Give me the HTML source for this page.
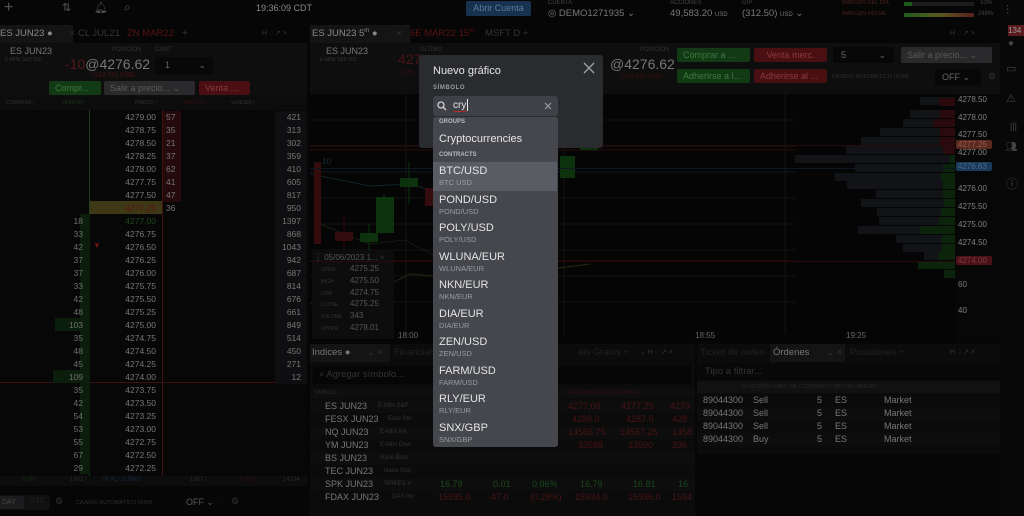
<!DOCTYPE html>
<html><head><meta charset="utf-8"><style>
*{margin:0;padding:0;box-sizing:border-box}
body{width:1024px;height:516px;background:#060606;overflow:hidden;position:relative;font-family:"Liberation Sans",sans-serif;color:#7a7a7a;font-size:9px}
.a{position:absolute;white-space:nowrap}
.p{background:#0e0e0f}
.row{position:absolute;left:0;width:307px;height:13px;font-size:8.5px;line-height:13px}
.row span{position:absolute}
.bid{right:224px;color:#6e6e6e}
.pr{right:151px;color:#767676}
.ask{left:166px;color:#767676}
.vd{right:6px;color:#767676}
.btn{position:absolute;height:14px;border-radius:2px;font-size:9px;line-height:14px;padding-left:6px;white-space:nowrap;overflow:hidden}
.g{background:#123a14;color:#3e7a40}
.r{background:#4a0f12;color:#8a3a3e}
.gr{background:#2a2a2c;color:#5a5a5a}
.lvl{position:absolute;height:8px}
.it{position:absolute;left:0;width:124px;height:28.5px;padding-left:6px}
.it b{display:block;font-weight:normal;color:#e4e4e6;font-size:11px;line-height:13px;padding-top:3px}
.it i{display:block;font-style:normal;color:#9a9ca1;font-size:7.5px;line-height:9px}
.ir{position:absolute;left:310px;width:385px;height:13px;font-size:9px;line-height:13px}
.ir span{position:absolute}
.or{position:absolute;left:697px;width:303px;height:13px;font-size:9px;line-height:13px;color:#777}
.or span{position:absolute}
</style></head><body>

<!-- top bar -->
<div class="a" style="left:4px;top:0;font-size:16px;color:#555;line-height:16px">+</div>
<div class="a" style="left:62px;top:1px;font-size:11px;color:#555">⇅</div>
<div class="a" style="left:94px;top:1px;font-size:11px;color:#555">🔔︎</div>
<div class="a" style="left:124px;top:0;font-size:12px;color:#555">⌕</div>
<div class="a" style="left:256px;top:3px;font-size:9px;color:#8a8a8a">19:36:09 CDT</div>
<div class="a" style="left:466px;top:1px;width:65px;height:15px;background:#16324e;border-radius:2px;color:#5b7a98;font-size:9px;line-height:15px;text-align:center">Abrir Cuenta</div>
<div class="a" style="left:548px;top:0;font-size:6px;color:#444">CUENTA</div>
<div class="a" style="left:548px;top:8px;font-size:9.5px;color:#777">◎ DEMO1271935 ⌄</div>
<div class="a" style="left:670px;top:0;font-size:6px;color:#444">ACCIONES</div>
<div class="a" style="left:670px;top:8px;font-size:9.5px;color:#777">49,583.20 <small style="font-size:6px">USD</small></div>
<div class="a" style="left:742px;top:0;font-size:6px;color:#444">G/P</div>
<div class="a" style="left:742px;top:8px;font-size:9.5px;color:#777">(312.50) <small style="font-size:6px">USD</small> ⌄</div>
<div class="a" style="left:842px;top:0;font-size:5.5px;color:#4a2020">MARGEN DEL DÍA</div>
<div class="a" style="left:842px;top:11px;font-size:5.5px;color:#4a2020">MARGEN INICIAL</div>
<div class="a" style="left:904px;top:2px;width:70px;height:4px;background:#1c1c1e"><div style="width:8px;height:4px;background:#1e5a1e"></div></div>
<div class="a" style="left:904px;top:13px;width:70px;height:4px;background:linear-gradient(90deg,#1e5a1e,#5a5a1e,#5a1e1e)"></div>
<div class="a" style="left:980px;top:0;font-size:6px;color:#444">10%</div>
<div class="a" style="left:978px;top:11px;font-size:6px;color:#444">248%</div>

<!-- right sidebar -->
<div class="a" style="left:1000px;top:0;width:24px;height:516px;background:#080808"></div>
<div class="a" style="left:1006px;top:3px;font-size:12px;color:#555">⫶</div>
<div class="a" style="left:1008px;top:25px;width:16px;height:11px;background:#5a1a1e;color:#999;font-size:8px;line-height:11px">134</div>
<div class="a" style="left:1008px;top:38px;font-size:10px;color:#444">●</div>
<div class="a" style="left:1006px;top:62px;font-size:11px;color:#444">▭</div>
<div class="a" style="left:1006px;top:92px;font-size:11px;color:#444">⚠︎</div>
<div class="a" style="left:1010px;top:121px;font-size:9px;color:#444">|||</div>
<div class="a" style="left:1005px;top:142px;font-size:10px;color:#444">👥︎</div>
<div class="a" style="left:1006px;top:175px;font-size:12px;color:#444">ⓘ</div>

<!-- tabs row -->
<div class="a p" style="left:0;top:25px;width:73px;height:18px;background:#141415"></div>
<div class="a" style="left:0;top:28px;font-size:9.5px;color:#888">ES JUN23 ● <span style="color:#333;margin-left:14px">×</span></div>
<div class="a" style="left:78px;top:28px;font-size:9.5px;color:#333">CL JUL21</div>
<div class="a" style="left:127px;top:28px;font-size:9.5px;color:#5a1212">ZN MAR22</div>
<div class="a" style="left:182px;top:28px;font-size:10px;color:#333">+</div>
<div class="a" style="left:262px;top:29px;font-size:7px;color:#333">H ◌ ↗ ×</div>
<div class="a" style="left:310px;top:25px;width:100px;height:18px;background:#141415"></div>
<div class="a" style="left:312px;top:28px;font-size:9.5px;color:#888">ES JUN23 5<sup style="font-size:6px">m</sup> ● <span style="color:#333;margin-left:16px">×</span></div>
<div class="a" style="left:410px;top:28px;font-size:9.5px;color:#5a1212">6E MAR22 15<sup style="font-size:6px">m</sup></div>
<div class="a" style="left:485px;top:28px;font-size:9.5px;color:#333">MSFT D  +</div>
<div class="a" style="left:950px;top:29px;font-size:7px;color:#333">H ◌ ↗ ×</div>

<!-- left panel header -->
<div class="a p" style="left:0;top:43px;width:307px;height:54px"></div>
<div class="a" style="left:10px;top:46px;font-size:9px;color:#777">ES JUN23</div>
<div class="a" style="left:5px;top:57px;font-size:5px;color:#333">E-MINI S&amp;P 500</div>
<div class="a" style="left:112px;top:47px;font-size:6px;color:#333">POSICIÓN</div>
<div class="a" style="left:155px;top:47px;font-size:6px;color:#333">CANT</div>
<div class="a" style="left:65px;top:56px;font-size:14px;color:#777"><span style="color:#5a1616">-10</span>@4276.62</div>
<div class="a" style="left:92px;top:72px;font-size:7px;color:#4a1414">(312.50) USD</div>
<div class="a" style="left:155px;top:57px;width:58px;height:17px;background:#080808;color:#666;font-size:9px;line-height:17px;padding-left:10px">1 <span style="margin-left:26px">⌄</span></div>
<div class="btn g" style="left:49px;top:81px;width:52px">Compr...</div>
<div class="btn gr" style="left:104px;top:81px;width:91px">Salir a precio... ⌄</div>
<div class="btn r" style="left:199px;top:81px;width:51px">Venta ...</div>
<div class="a" style="left:0;top:97px;width:307px;height:13px;background:#0c0c0d"></div>
<div class="a" style="left:6px;top:100px;font-size:5px;color:#333">COMPRAR |</div>
<div class="a" style="left:62px;top:100px;font-size:5px;color:#1a3a1a">OFERTA |</div>
<div class="a" style="left:135px;top:100px;font-size:5px;color:#333">PRECIO |</div>
<div class="a" style="left:184px;top:100px;font-size:5px;color:#3a1212">PRECIO |</div>
<div class="a" style="left:231px;top:100px;font-size:5px;color:#333">VENDER |</div>

<!-- order book -->
<div class="a" style="left:0;top:110px;width:307px;height:366px;background:#070707"></div>
<div class="a" style="left:89px;top:110px;width:1px;height:366px;background:#1a401a"></div>
<div class="a" style="left:162px;top:110px;width:1px;height:366px;background:#401212"></div>
<div class="a" style="left:0;top:382px;width:307px;height:1px;background:#3a1010"></div>
<div class="a" style="left:90px;top:201px;width:72px;height:13px;background:#3e3816"></div>
<div class="a" style="left:163px;top:111px;width:18px;height:91px;background:#250a0c"></div>
<div class="a" style="left:80px;top:214px;width:10px;height:260px;background:#0b1e0b"></div>
<div class="a" style="left:55px;top:318px;width:35px;height:13px;background:#0b1e0b"></div>
<div class="a" style="left:53px;top:370px;width:37px;height:13px;background:#0b1e0b"></div>
<div class="a" style="left:275px;top:111px;width:32px;height:273px;background:#0f0f11"></div>
<div class="a" style="left:93px;top:241px;font-size:8px;color:#6a1414">▼</div>

<div class="row" style="top:111px"><span class="pr">4279.00</span><span class="ask">57</span><span class="vd">421</span></div>
<div class="row" style="top:124px"><span class="pr">4278.75</span><span class="ask">35</span><span class="vd">313</span></div>
<div class="row" style="top:137px"><span class="pr">4278.50</span><span class="ask">21</span><span class="vd">302</span></div>
<div class="row" style="top:150px"><span class="pr">4278.25</span><span class="ask">37</span><span class="vd">359</span></div>
<div class="row" style="top:163px"><span class="pr">4278.00</span><span class="ask">62</span><span class="vd">410</span></div>
<div class="row" style="top:176px"><span class="pr">4277.75</span><span class="ask">41</span><span class="vd">605</span></div>
<div class="row" style="top:189px"><span class="pr">4277.50</span><span class="ask">47</span><span class="vd">817</span></div>
<div class="row" style="top:202px"><span class="pr" style="color:#5a1414">4277.25</span><span class="ask">36</span><span class="vd">950</span></div>
<div class="row" style="top:215px"><span class="bid">18</span><span class="pr" style="color:#1e4a1e">4277.00</span><span class="vd">1397</span></div>
<div class="row" style="top:228px"><span class="bid">33</span><span class="pr">4276.75</span><span class="vd">868</span></div>
<div class="row" style="top:241px"><span class="bid">42</span><span class="pr">4276.50</span><span class="vd">1043</span></div>
<div class="row" style="top:254px"><span class="bid">37</span><span class="pr">4276.25</span><span class="vd">942</span></div>
<div class="row" style="top:267px"><span class="bid">37</span><span class="pr">4276.00</span><span class="vd">687</span></div>
<div class="row" style="top:280px"><span class="bid">33</span><span class="pr">4275.75</span><span class="vd">814</span></div>
<div class="row" style="top:293px"><span class="bid">42</span><span class="pr">4275.50</span><span class="vd">676</span></div>
<div class="row" style="top:306px"><span class="bid">48</span><span class="pr">4275.25</span><span class="vd">661</span></div>
<div class="row" style="top:319px"><span class="bid">103</span><span class="pr">4275.00</span><span class="vd">849</span></div>
<div class="row" style="top:332px"><span class="bid">35</span><span class="pr">4274.75</span><span class="vd">514</span></div>
<div class="row" style="top:345px"><span class="bid">48</span><span class="pr">4274.50</span><span class="vd">450</span></div>
<div class="row" style="top:358px"><span class="bid">45</span><span class="pr">4274.25</span><span class="vd">271</span></div>
<div class="row" style="top:371px"><span class="bid">109</span><span class="pr">4274.00</span><span class="vd">12</span></div>
<div class="row" style="top:384px"><span class="bid">35</span><span class="pr">4273.75</span></div>
<div class="row" style="top:397px"><span class="bid">42</span><span class="pr">4273.50</span></div>
<div class="row" style="top:410px"><span class="bid">54</span><span class="pr">4273.25</span></div>
<div class="row" style="top:423px"><span class="bid">53</span><span class="pr">4273.00</span></div>
<div class="row" style="top:436px"><span class="bid">55</span><span class="pr">4272.75</span></div>
<div class="row" style="top:449px"><span class="bid">67</span><span class="pr">4272.50</span></div>
<div class="row" style="top:462px"><span class="bid">29</span><span class="pr">4272.25</span></div>

<div class="a" style="left:0;top:476px;width:307px;height:10px;background:#0c0c0d"></div>
<div class="a" style="left:22px;top:477px;font-size:6px;color:#143014">0 (0) |</div>
<div class="a" style="left:70px;top:477px;font-size:6px;color:#2a2a2a">1602 |</div>
<div class="a" style="left:103px;top:477px;font-size:6px;color:#122a44">IR AL ÚLTIMO</div>
<div class="a" style="left:190px;top:477px;font-size:6px;color:#2a2a2a">1367 |</div>
<div class="a" style="left:240px;top:477px;font-size:6px;color:#3a1010">0 (0) |</div>
<div class="a" style="left:283px;top:477px;font-size:6px;color:#2a2a2a">14104</div>
<div class="a" style="left:0;top:495px;width:50px;height:15px;background:#101011;border-radius:3px"></div>
<div class="a" style="left:0;top:496px;width:24px;height:13px;background:#1c1c1e;font-size:7px;color:#444;line-height:13px;padding-left:2px">DAY</div>
<div class="a" style="left:30px;top:498px;font-size:7px;color:#222">GTC</div>
<div class="a" style="left:55px;top:496px;font-size:9px;color:#333">⚙</div>
<div class="a" style="left:76px;top:500px;font-size:5.5px;color:#2e2e2e">CAJERO AUTOMÁTICO (ATM)</div>
<div class="a" style="left:178px;top:494px;width:46px;height:16px;background:#070707;font-size:9px;color:#555;line-height:16px;padding-left:8px">OFF ⌄</div>
<div class="a" style="left:231px;top:496px;font-size:9px;color:#333">⚙</div>

<!-- chart header -->
<div class="a p" style="left:310px;top:43px;width:690px;height:51px"></div>
<div class="a" style="left:326px;top:46px;font-size:9px;color:#777">ES JUN23</div>
<div class="a" style="left:320px;top:57px;font-size:5px;color:#333">E-MINI S&amp;P 500</div>
<div class="a" style="left:398px;top:51px;font-size:14px;color:#4a1414">427</div>
<div class="a" style="left:398px;top:70px;font-size:7px;color:#3a1010">-3.75</div>
<div class="a" style="left:420px;top:47px;font-size:6px;color:#333">ÚLTIMO</div>
<div class="a" style="left:640px;top:47px;font-size:6px;color:#333">POSICIÓN</div>
<div class="a" style="left:610px;top:56px;font-size:14px;color:#777">@4276.62</div>
<div class="a" style="left:620px;top:73px;font-size:7px;color:#3a1010">(312.50) USD</div>
<div class="btn g" style="left:677px;top:48px;width:73px">Comprar a ...</div>
<div class="btn r" style="left:754px;top:48px;width:73px;text-align:center;padding:0">Venta merc.</div>
<div class="btn g" style="left:677px;top:69px;width:73px">Adherirse a l...</div>
<div class="btn r" style="left:754px;top:69px;width:73px">Adherirse al ...</div>
<div class="a" style="left:833px;top:47px;width:61px;height:16px;background:#070707;font-size:9px;color:#666;line-height:16px;padding-left:8px">5 <span style="margin-left:30px">⌄</span></div>
<div class="btn gr" style="left:901px;top:47px;width:91px;height:16px;line-height:16px">Salir a precio... ⌄</div>
<div class="a" style="left:832px;top:74px;font-size:5.5px;color:#2e2e2e">CAJERO AUTOMÁTICO (ATM)</div>
<div class="a" style="left:935px;top:69px;width:46px;height:16px;background:#070707;font-size:9px;color:#666;line-height:16px;padding-left:7px">OFF ⌄</div>
<div class="a" style="left:988px;top:71px;font-size:9px;color:#333">⚙</div>

<!-- chart area -->
<div class="a" style="left:310px;top:94px;width:690px;height:248px;background:#050505"></div>
<svg class="a" style="left:310px;top:94px" width="690" height="248">
<g stroke="#121212" stroke-width="1">
<line x1="0" y1="26" x2="485" y2="26"/><line x1="0" y1="52" x2="485" y2="52"/><line x1="0" y1="78" x2="485" y2="78"/><line x1="0" y1="104" x2="485" y2="104"/><line x1="0" y1="130" x2="485" y2="130"/><line x1="0" y1="156" x2="485" y2="156"/><line x1="0" y1="182" x2="485" y2="182"/><line x1="0" y1="208" x2="485" y2="208"/>
<line x1="96" y1="0" x2="96" y2="240"/><line x1="254" y1="0" x2="254" y2="240"/><line x1="475" y1="0" x2="475" y2="240"/>
</g>
<line x1="0" y1="56" x2="485" y2="56" stroke="#2a0b0b"/>
<line x1="0" y1="78" x2="485" y2="78" stroke="#0e1820"/>
<line x1="0" y1="167" x2="485" y2="167" stroke="#2a0b0b"/>
<polyline points="0,80 60,92 100,90 160,108" stroke="#12232a" fill="none"/>
<polyline points="10,130 60,150 95,146 140,170 200,160" stroke="#1a1a10" fill="none"/>
<polyline points="0,210 60,200 100,180 160,185 280,170" stroke="#2a2410" fill="none"/>
<text x="12" y="70" font-size="8" fill="#1a2a3a" font-family="Liberation Sans">10</text>
<rect x="4" y="68" width="7" height="82" fill="#340c0e"/>
<line x1="34" y1="120" x2="34" y2="160" stroke="#340c0e"/><rect x="25" y="138" width="18" height="9" fill="#340c0e"/>
<line x1="59" y1="130" x2="59" y2="160" stroke="#0c320e"/><rect x="50" y="139" width="18" height="9" fill="#0c320e"/>
<line x1="74" y1="100" x2="74" y2="140" stroke="#0c320e"/><rect x="66" y="103" width="18" height="36" fill="#0c320e"/>
<line x1="99" y1="68" x2="99" y2="110" stroke="#0c320e"/><rect x="90" y="84" width="18" height="9" fill="#0c320e"/>
<rect x="115" y="94" width="12" height="18" fill="#340c0e"/>
<rect x="250" y="62" width="15" height="22" fill="#0c320e"/>
<rect x="270" y="50" width="18" height="6" fill="#0c320e"/>
<text x="88" y="244" font-size="8" fill="#666" font-family="Liberation Sans">18:00</text>
<text x="385" y="244" font-size="8" fill="#666" font-family="Liberation Sans">18:55</text>
<text x="536" y="244" font-size="8" fill="#666" font-family="Liberation Sans">19:25</text>
</svg>
<!-- ohlc box -->
<div class="a" style="left:312px;top:251px;width:82px;height:88px;background:#0d0d0e"></div>
<div class="a" style="left:314px;top:253px;font-size:8px;color:#555">⋮ 05/06/2023 1... <span style="color:#333">×</span></div>
<div class="a" style="left:321px;top:265px;font-size:5px;color:#333;line-height:11.8px">OPEN<br>HIGH<br>LOW<br>CLOSE<br>VOLUME<br>UPPER</div>
<div class="a" style="left:350px;top:263px;font-size:8px;color:#555;line-height:11.8px">4275.25<br>4275.50<br>4274.75<br>4275.25<br>343<br>4278.01</div>

<!-- price ladder (right) -->
<div class="a" style="left:955px;top:94px;width:45px;height:248px;background:#070707"></div>
<div class="lvl" style="left:920px;top:97px;width:35px;background:#121316"></div>
<div class="lvl" style="left:939px;top:98px;width:16px;background:#2a0a0c"></div>
<div class="lvl" style="left:910px;top:110px;width:45px;background:#121316"></div>
<div class="lvl" style="left:940px;top:110px;width:15px;background:#2a0a0c"></div>
<div class="lvl" style="left:903px;top:119px;width:52px;background:#121316"></div>
<div class="lvl" style="left:934px;top:119px;width:21px;background:#2a0a0c"></div>
<div class="lvl" style="left:880px;top:128px;width:75px;background:#121316"></div>
<div class="lvl" style="left:940px;top:128px;width:15px;background:#2a0a0c"></div>
<div class="lvl" style="left:861px;top:137px;width:94px;background:#121316"></div>
<div class="lvl" style="left:940px;top:137px;width:15px;background:#2a0a0c"></div>
<div class="lvl" style="left:846px;top:146px;width:109px;background:#121316"></div>
<div class="lvl" style="left:943px;top:146px;width:12px;background:#2a0a0c"></div>
<div class="lvl" style="left:795px;top:155px;width:160px;background:#121316"></div>
<div class="lvl" style="left:950px;top:155px;width:5px;background:#0b240b"></div>
<div class="lvl" style="left:855px;top:164px;width:100px;background:#121316"></div>
<div class="lvl" style="left:943px;top:164px;width:12px;background:#0b240b"></div>
<div class="lvl" style="left:835px;top:173px;width:120px;background:#121316"></div>
<div class="lvl" style="left:941px;top:173px;width:14px;background:#0b240b"></div>
<div class="lvl" style="left:847px;top:181px;width:108px;background:#121316"></div>
<div class="lvl" style="left:943px;top:181px;width:12px;background:#0b240b"></div>
<div class="lvl" style="left:876px;top:190px;width:79px;background:#121316"></div>
<div class="lvl" style="left:943px;top:190px;width:12px;background:#0b240b"></div>
<div class="lvl" style="left:861px;top:199px;width:94px;background:#121316"></div>
<div class="lvl" style="left:944px;top:199px;width:11px;background:#0b240b"></div>
<div class="lvl" style="left:877px;top:208px;width:78px;background:#121316"></div>
<div class="lvl" style="left:941px;top:208px;width:14px;background:#0b240b"></div>
<div class="lvl" style="left:879px;top:217px;width:76px;background:#121316"></div>
<div class="lvl" style="left:939px;top:217px;width:16px;background:#0b240b"></div>
<div class="lvl" style="left:858px;top:226px;width:97px;background:#121316"></div>
<div class="lvl" style="left:920px;top:226px;width:35px;background:#0b240b"></div>
<div class="lvl" style="left:896px;top:235px;width:59px;background:#121316"></div>
<div class="lvl" style="left:942px;top:235px;width:13px;background:#0b240b"></div>
<div class="lvl" style="left:903px;top:244px;width:52px;background:#121316"></div>
<div class="lvl" style="left:942px;top:244px;width:13px;background:#0b240b"></div>
<div class="lvl" style="left:924px;top:252px;width:31px;background:#121316"></div>
<div class="lvl" style="left:938px;top:252px;width:17px;background:#0b240b"></div>
<div class="lvl" style="left:918px;top:261px;width:37px;background:#0b240b"></div>
<div class="lvl" style="left:944px;top:270px;width:11px;background:#0b240b"></div>
<div class="a" style="left:310px;top:145px;width:645px;height:1px;background:#2a0b0b"></div>
<div class="a" style="left:310px;top:168px;width:645px;height:1px;background:#0e1820"></div>
<div class="a" style="left:310px;top:261px;width:645px;height:1px;background:#2a0b0b"></div>
<div class="a" style="left:958px;top:95px;font-size:8px;color:#808080;line-height:9px">4278.50</div>
<div class="a" style="left:958px;top:113px;font-size:8px;color:#808080">4278.00</div>
<div class="a" style="left:958px;top:130px;font-size:8px;color:#808080">4277.50</div>
<div class="a" style="left:956px;top:140px;width:36px;height:9px;background:#5a2a20;border-radius:2px;font-size:8px;color:#9a5a4a;line-height:9px;padding-left:2px">4277.25</div>
<div class="a" style="left:958px;top:148px;font-size:8px;color:#808080">4277.00</div>
<div class="a" style="left:956px;top:162px;width:36px;height:9px;background:#1a3a5a;border-radius:2px;font-size:8px;color:#4a6a8a;line-height:9px;padding-left:2px">4276.63</div>
<div class="a" style="left:958px;top:184px;font-size:8px;color:#808080">4276.00</div>
<div class="a" style="left:958px;top:202px;font-size:8px;color:#808080">4275.50</div>
<div class="a" style="left:958px;top:220px;font-size:8px;color:#808080">4275.00</div>
<div class="a" style="left:958px;top:238px;font-size:8px;color:#808080">4274.50</div>
<div class="a" style="left:956px;top:256px;width:36px;height:9px;background:#4a1216;border-radius:2px;font-size:8px;color:#7a3a3e;line-height:9px;padding-left:2px">4274.00</div>
<div class="a" style="left:958px;top:280px;font-size:8px;color:#808080">60</div>
<div class="a" style="left:958px;top:306px;font-size:8px;color:#808080">40</div>

<!-- indices panel -->
<div class="a" style="left:310px;top:344px;width:385px;height:172px;background:#0b0b0c"></div>
<div class="a" style="left:310px;top:344px;width:80px;height:18px;background:#141415"></div>
<div class="a" style="left:312px;top:347px;font-size:9.5px;color:#777">Indices ● <span style="color:#333;margin-left:14px">⌄ ×</span></div>
<div class="a" style="left:394px;top:347px;font-size:9.5px;color:#222">Financials</div>
<div class="a" style="left:578px;top:347px;font-size:9.5px;color:#222">als  Grains  +</div>
<div class="a" style="left:640px;top:348px;font-size:7px;color:#333">⌄ H ◌ ↗ ×</div>
<div class="a" style="left:313px;top:366px;width:378px;height:18px;background:#060606;font-size:9.5px;color:#333;line-height:18px;padding-left:6px">⌕ Agregar símbolo...</div>
<div class="a" style="left:310px;top:388px;width:385px;height:10px;background:#0e0e0f;font-size:5px;color:#2a2a2a;line-height:10px;padding-left:4px">SÍMBOLO</div>
<div class="a" style="left:570px;top:390px;font-size:5px;color:#3a1010">PRECIO DE  |    ECIO DE  |   ABIE</div>
<div class="ir" style="top:400px;background:#0d0d0e"><span style="left:15px;color:#777">ES JUN23</span><span style="left:68px;font-size:6px;color:#333">E-Mini S&amp;P</span><span style="left:258px;color:#4a1414">4277.00</span><span style="left:311px;color:#4a1414">4277.25</span><span style="left:360px;color:#4a1414">4279</span></div>
<div class="ir" style="top:413px"><span style="left:15px;color:#777">FESX JUN23</span><span style="left:78px;font-size:6px;color:#333">Euro Sto</span><span style="left:262px;color:#4a1414">4286.0</span><span style="left:316px;color:#4a1414">4287.0</span><span style="left:362px;color:#4a1414">428</span></div>
<div class="ir" style="top:426px;background:#0d0d0e"><span style="left:15px;color:#777">NQ JUN23</span><span style="left:70px;font-size:6px;color:#333">E-Mini NA</span><span style="left:258px;color:#4a1414">14566.75</span><span style="left:310px;color:#4a1414">14567.25</span><span style="left:362px;color:#4a1414">1458</span></div>
<div class="ir" style="top:439px"><span style="left:15px;color:#777">YM JUN23</span><span style="left:70px;font-size:6px;color:#333">E-Mini Dow</span><span style="left:268px;color:#4a1414">33588</span><span style="left:318px;color:#4a1414">33590</span><span style="left:362px;color:#4a1414">336</span></div>
<div class="ir" style="top:452px;background:#0d0d0e"><span style="left:15px;color:#777">BS JUN23</span><span style="left:70px;font-size:6px;color:#333">Nano Bloo</span></div>
<div class="ir" style="top:465px"><span style="left:15px;color:#777">TEC JUN23</span><span style="left:74px;font-size:6px;color:#333">Nano Sup</span></div>
<div class="ir" style="top:478px;background:#0d0d0e"><span style="left:15px;color:#777">SPK JUN23</span><span style="left:74px;font-size:6px;color:#333">SPIKES V</span><span style="left:130px;color:#1a4a1a">16.79</span><span style="left:183px;color:#1a4a1a">0.01</span><span style="left:222px;color:#1a4a1a">0.06%</span><span style="left:270px;color:#1a4a1a">16.79</span><span style="left:323px;color:#1a4a1a">16.81</span><span style="left:368px;color:#1a4a1a">16</span></div>
<div class="ir" style="top:491px"><span style="left:15px;color:#777">FDAX JUN23</span><span style="left:82px;font-size:6px;color:#333">DAX Inc</span><span style="left:128px;color:#4a1414">15935.0</span><span style="left:178px;color:#4a1414">-47.0</span><span style="left:220px;color:#4a1414">(0.29%)</span><span style="left:265px;color:#4a1414">15934.0</span><span style="left:318px;color:#4a1414">15936.0</span><span style="left:362px;color:#4a1414">1594</span></div>

<!-- orders panel -->
<div class="a" style="left:697px;top:344px;width:303px;height:110px;background:#0b0b0c"></div>
<div class="a" style="left:700px;top:347px;font-size:9.5px;color:#222">Ticket de orden</div>
<div class="a" style="left:770px;top:344px;width:75px;height:18px;background:#141415"></div>
<div class="a" style="left:773px;top:347px;font-size:9.5px;color:#777">Órdenes <span style="color:#333;margin-left:14px">⌄ ×</span></div>
<div class="a" style="left:850px;top:347px;font-size:9.5px;color:#222">Posiciones  +</div>
<div class="a" style="left:950px;top:348px;font-size:7px;color:#333">H ◌ ↗ ×</div>
<div class="a" style="left:697px;top:363px;width:303px;height:17px;background:#080808;font-size:9.5px;color:#333;line-height:17px;padding-left:8px">Tipo a filtrar...</div>
<div class="a" style="left:697px;top:381px;width:303px;height:12px;background:#111112;font-size:5px;color:#2a2a2a;line-height:12px"><span style="margin-left:45px">ID | ACCIÓN |   CANT. DE  |  CONTRATO  |  TIPO DE       |        PRECIO  |</span></div>
<div class="or" style="top:394px"><span style="left:6px">89044300</span><span style="left:56px">Sell</span><span style="left:120px">5</span><span style="left:138px">ES</span><span style="left:187px">Market</span></div>
<div class="or" style="top:407px;background:#0d0d0e"><span style="left:6px">89044300</span><span style="left:56px">Sell</span><span style="left:120px">5</span><span style="left:138px">ES</span><span style="left:187px">Market</span></div>
<div class="or" style="top:420px"><span style="left:6px">89044300</span><span style="left:56px">Sell</span><span style="left:120px">5</span><span style="left:138px">ES</span><span style="left:187px">Market</span></div>
<div class="or" style="top:433px;background:#0d0d0e"><span style="left:6px">89044300</span><span style="left:56px">Buy</span><span style="left:120px">5</span><span style="left:138px">ES</span><span style="left:187px">Market</span></div>

<!-- modal -->
<div class="a" style="left:419px;top:55px;width:184px;height:93px;background:#2a2b2f;border-radius:3px"></div>
<div class="a" style="left:433px;top:65px;font-size:11px;color:#e6e6e8">Nuevo gráfico</div>
<svg class="a" style="left:583px;top:62px" width="12" height="12"><path d="M1 1L11 11M11 1L1 11" stroke="#a0a2a6" stroke-width="1.3"/></svg>
<div class="a" style="left:433px;top:85px;font-size:6px;color:#9a9ca0;letter-spacing:.6px;font-weight:bold">SÍMBOLO</div>
<div class="a" style="left:433px;top:96px;width:125px;height:20px;background:#3f4146;border-radius:3px"></div>
<svg class="a" style="left:437px;top:101px" width="10" height="10"><circle cx="4" cy="4" r="3" stroke="#d0d0d2" stroke-width="1.3" fill="none"/><path d="M6.2 6.2L9 9" stroke="#d0d0d2" stroke-width="1.4"/></svg>
<div class="a" style="left:453px;top:100px;font-size:10px;color:#e6e6e8;border-bottom:1px solid #b02828;line-height:11px">cry</div>
<div class="a" style="left:467px;top:99px;width:1px;height:12px;background:#e6e6e8"></div>
<svg class="a" style="left:544px;top:102px" width="8" height="8"><path d="M1 1L7 7M7 1L1 7" stroke="#9a9ca0" stroke-width="1.2"/></svg>
<div class="a" style="left:433px;top:117px;width:125px;height:330px;background:#45474c;border-radius:3px;overflow:hidden">
 <div class="a" style="left:6px;top:2px;font-size:6px;color:#b8babe;font-weight:bold">GROUPS</div>
 <div class="a" style="left:6px;top:16px;font-size:11px;color:#e6e6e8">Cryptocurrencies</div>
 <div class="a" style="left:6px;top:35px;font-size:6px;color:#b8babe;font-weight:bold">CONTRACTS</div>
 <div class="it" style="top:45px;background:#595c62"><b>BTC/USD</b><i>BTC USD</i></div>
 <div class="it" style="top:73.5px"><b>POND/USD</b><i>POND/USD</i></div>
 <div class="it" style="top:102px"><b>POLY/USD</b><i>POLY/USD</i></div>
 <div class="it" style="top:130.5px"><b>WLUNA/EUR</b><i>WLUNA/EUR</i></div>
 <div class="it" style="top:159px"><b>NKN/EUR</b><i>NKN/EUR</i></div>
 <div class="it" style="top:187.5px"><b>DIA/EUR</b><i>DIA/EUR</i></div>
 <div class="it" style="top:216px"><b>ZEN/USD</b><i>ZEN/USD</i></div>
 <div class="it" style="top:244.5px"><b>FARM/USD</b><i>FARM/USD</i></div>
 <div class="it" style="top:273px"><b>RLY/EUR</b><i>RLY/EUR</i></div>
 <div class="it" style="top:301.5px"><b>SNX/GBP</b><i>SNX/GBP</i></div>
</div>
</body></html>
